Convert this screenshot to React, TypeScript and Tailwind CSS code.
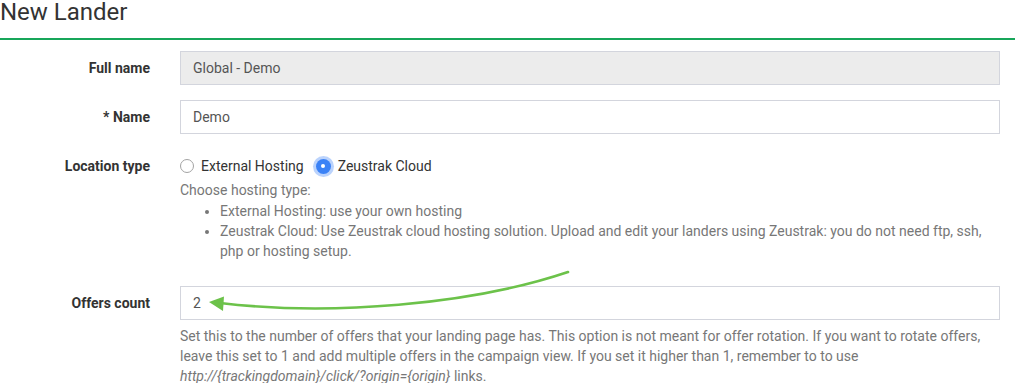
import React from "react";

const font = { fontFamily: "Roboto, 'Noto Sans', Arial, sans-serif" };

function Label({ children }: { children: React.ReactNode }) {
  return (
    <div className="text-right text-[14px] font-bold text-[#333] leading-[20px]">{children}</div>
  );
}

export default function App() {
  return (
    <div className="relative w-[1015px] h-[383px] overflow-hidden bg-white" style={font}>
      <div className="h-[40px] border-b-2 border-[#18a65a]">
        <h1 className="text-[24px] leading-[24px] font-normal text-[#333]">New Lander</h1>
      </div>

      <div className="pr-[15px]">
        <div className="mt-[11px] grid grid-cols-[150px_1fr] gap-x-[30px] items-center">
          <Label>Full name</Label>
          <div className="h-[34px] border border-[#d3d5dd] bg-[#ececec] px-[12px] flex items-center text-[14px] text-[#555]">
            Global - Demo
          </div>
        </div>

        <div className="mt-[15px] grid grid-cols-[150px_1fr] gap-x-[30px] items-center">
          <Label>* Name</Label>
          <div className="h-[34px] border border-[#d3d5dd] bg-white px-[12px] flex items-center text-[14px] text-[#555]">
            Demo
          </div>
        </div>

        <div className="mt-[22px] grid grid-cols-[150px_1fr] gap-x-[30px] items-start">
          <Label>Location type</Label>
          <div>
            <div className="h-[20px] flex items-center text-[14px] text-[#333]">
              <span className="w-[14px] h-[14px] rounded-full border border-[#a3a3a3] bg-white"></span>
              <span className="ml-[7px]">External Hosting</span>
              <span className="ml-[12px] w-[15px] h-[15px] rounded-full bg-[#3b82f6] shadow-[0_0_0_3px_rgba(59,130,246,0.35)] flex items-center justify-center">
                <span className="w-[4px] h-[4px] rounded-full bg-white"></span>
              </span>
              <span className="ml-[7px]">Zeustrak Cloud</span>
            </div>
            <div className="mt-[4px] text-[14px] leading-[20px] text-[#777]">
              <div>Choose hosting type:</div>
              <ul className="mt-[1px] list-disc pl-[40px]">
                <li>External Hosting: use your own hosting</li>
                <li>
                  Zeustrak Cloud: Use Zeustrak cloud hosting solution. Upload and edit your landers using Zeustrak: you do not need ftp, ssh, php or hosting setup.
                </li>
              </ul>
            </div>
          </div>
        </div>

        <div className="mt-[25px] grid grid-cols-[150px_1fr] gap-x-[30px] items-center">
          <Label>Offers count</Label>
          <div className="h-[34px] border border-[#d3d5dd] bg-white px-[12px] flex items-center text-[14px] text-[#555]">
            2
          </div>
        </div>
        <div className="grid grid-cols-[150px_1fr] gap-x-[30px]">
          <div></div>
          <div className="mt-[6px] text-[14px] leading-[20px] text-[#777]">
            Set this to the number of offers that your landing page has. This option is not meant for offer rotation. If you want to rotate offers, leave this set to 1 and add multiple offers in the campaign view. If you set it higher than 1, remember to to use{" "}
            <i>http://{"{trackingdomain}"}/click/?origin={"{origin}"}</i> links.
          </div>
        </div>
      </div>

      <svg className="absolute left-0 top-0 pointer-events-none" width="1015" height="383" viewBox="0 0 1015 383">
        <path d="M568 272 C 470 305, 330 316, 220 303" fill="none" stroke="#6cc24a" strokeWidth="2.6" strokeLinecap="round" />
        <polygon points="209,302 224,296.5 223,311" fill="#6cc24a" />
      </svg>
    </div>
  );
}
